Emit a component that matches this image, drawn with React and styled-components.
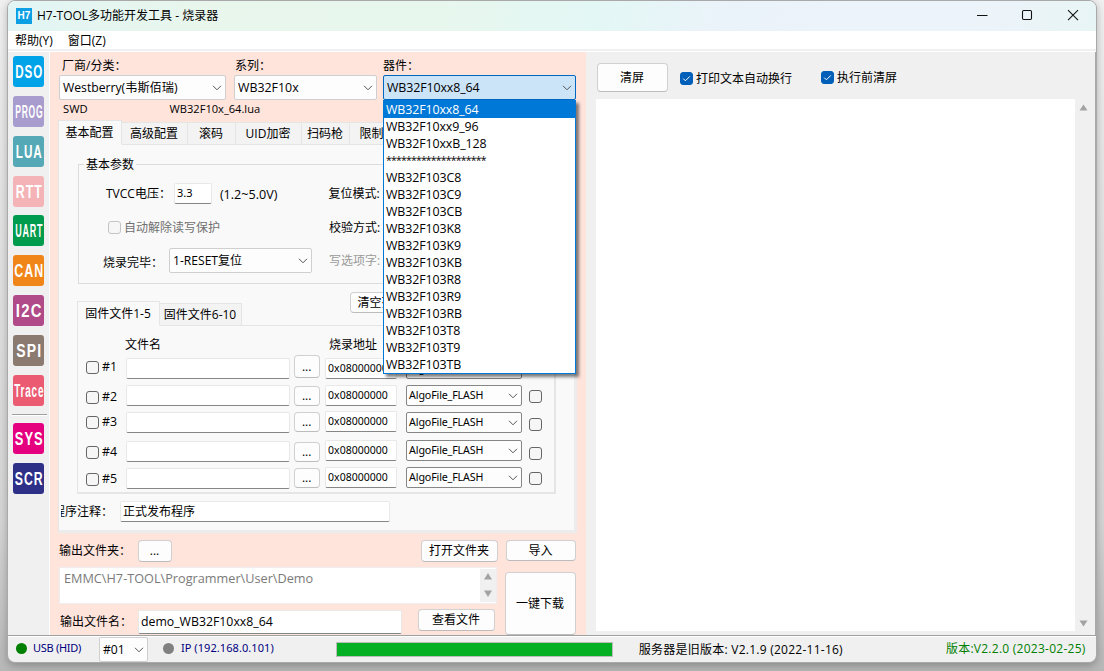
import { useState } from 'react';
import styled, { createGlobalStyle } from 'styled-components';

const GlobalStyle = createGlobalStyle`
  * {
    box-sizing: border-box;
  }

  body {
    margin: 0;
    overflow: hidden;
    font-family: "Open Sans", "Noto Sans CJK SC", sans-serif;
    font-size: 12px;
    color: #000;
  }
`;

const Desktop = styled.div`
  width: 1104px;
  height: 671px;
  padding: 0 7px 9px;
  overflow: hidden;
  background: linear-gradient(180deg, #f0f0f0 0, #e4e4e4 200px, #d6d6d6 520px, #b8b8b8 671px);
`;

const Window = styled.div`
  display: flex;
  flex-direction: column;
  width: 1090px;
  height: 663px;
  border: 1px solid #a9a9a9;
  border-radius: 8px;
  overflow: hidden;
  background: #f0f0f0;
  box-shadow: 0 3px 9px rgba(0, 0, 0, 0.25);
`;

const TitleBar = styled.div`
  display: flex;
  align-items: center;
  flex: none;
  height: 30px;
  padding-left: 8px;
  background: linear-gradient(100deg, #e2f5f5 0, #e8f6ec 18%, #e8f7ed 38%, #e3f7f5 54%, #ebf3fa 66%, #edf3fa 88%, #e8f5f5 100%);
`;

const Logo = styled.div`
  width: 16px;
  height: 16px;
  margin-right: 5px;
  background: #0d9fe4;
  color: #fff;
  font: bold 10px/16px "Liberation Sans", sans-serif;
  text-align: center;
`;

const Text = styled.span`
  display: inline-block;
  flex: none;
  white-space: pre;
  font-family: ${(p) => (p.$tahoma ? '"Noto Sans", sans-serif' : 'inherit')};
  font-size: ${(p) => p.$size || 12}px;
  line-height: 16px;
  letter-spacing: ${(p) => p.$ls || 0}px;
  color: ${(p) => p.$color || '#000'};
  margin-left: ${(p) => p.$ml || 0}px;
  margin-top: ${(p) => p.$mt || 0}px;
`;

const Controls = styled.svg`
  margin-left: auto;
  fill: none;
  stroke: #111;
  stroke-width: 1.1;
`;

const MenuBar = styled.div`
  display: flex;
  gap: 15px;
  flex: none;
  height: 18px;
  padding-left: 7px;
  background: #fff;
`;

const Divider = styled.div`
  flex: none;
  height: 3px;
  background: #f0f0f0;
  border-bottom: 1px solid #fff;
`;

const Body = styled.div`
  display: flex;
  height: 583px;
  flex: none;
`;

const Sidebar = styled.div`
  width: 42px;
  padding: 4px 0 0 5px;
  border-right: 1px solid #fff;
`;

const ToolIcon = styled.svg`
  display: block;
  margin-bottom: ${(p) => p.$gap}px;
  font-family: "Liberation Sans", sans-serif;
  font-weight: bold;
  letter-spacing: 1.5px;
`;

const SideLine = styled.div`
  width: 35px;
  height: 2px;
  margin: 8px 0 7px -1px;
  background: #a0a0a0;
  border-bottom: 1px solid #fff;
`;

const Programmer = styled.div`
  width: 536px;
  padding-left: 8px;
  background: #ffe4dc;
`;

const Row = styled.div`
  display: flex;
  align-items: ${(p) => p.$align || 'flex-start'};
  height: ${(p) => p.$h}px;
  padding-left: ${(p) => p.$pl || 0}px;
`;

const Chooser = styled.div`
  position: relative;
  width: ${(p) => p.$w}px;
  margin-left: ${(p) => p.$ml || 0}px;
  padding-top: 5px;
`;

const Combo = styled.div`
  display: flex;
  align-items: center;
  justify-content: space-between;
  flex: none;
  width: ${(p) => p.$w}px;
  height: ${(p) => p.$h || 25}px;
  margin-left: ${(p) => p.$ml || 0}px;
  margin-top: ${(p) => p.$mt || 0}px;
  padding: 0 3px 0 ${(p) => p.$pl || 3}px;
  border: 1px solid ${(p) => (p.$open ? '#0067c0' : p.$border || '#cfcfcf')};
  border-radius: 2px;
  background: ${(p) => (p.$open ? '#cce4f7' : '#fdfdfd')};
`;

const DropList = styled.ul`
  position: absolute;
  z-index: 2;
  top: 48px;
  left: 0;
  width: 193px;
  margin: 0;
  padding: 0;
  list-style: none;
  background: #fff;
  border: 1px solid #0078d7;
  box-shadow: 3px 3px 3px rgba(0, 0, 0, 0.5);
`;

const DropItem = styled.li`
  height: 17px;
  padding-left: 2px;
  font-size: ${(p) => (p.$rule ? 10.5 : 12.4)}px;
  line-height: ${(p) => (p.$rule ? 17 : 18)}px;
  letter-spacing: ${(p) => (p.$rule ? -0.8 : -0.1)}px;
  white-space: nowrap;
  color: ${(p) => (p.$selected ? '#fff' : '#000')};
  background: ${(p) => (p.$selected ? '#0078d7' : '#fff')};
`;

const Tabs = styled.div`
  display: flex;
  align-items: flex-end;
  width: ${(p) => p.$w}px;
  height: 25px;
  margin-bottom: -1px;
  overflow: hidden;
`;

const Tab = styled.div`
  display: flex;
  justify-content: center;
  align-items: center;
  flex: none;
  width: ${(p) => p.$w}px;
  height: ${(p) => (p.$active ? 25 : 23)}px;
  padding-bottom: ${(p) => (p.$active ? 2 : 1)}px;
  padding-right: 1px;
  border: 1px solid #e5e5e5;
  border-left-width: ${(p) => (p.$active ? 1 : 0)}px;
  border-bottom-color: ${(p) => (p.$active ? '#f9f9f9' : '#e5e5e5')};
  background: ${(p) => (p.$active ? '#f9f9f9' : '#f3f3f3')};
`;

const TabPage = styled.div`
  width: 519px;
  height: 389px;
  border: 1px solid #e5e5e5;
  border-right: 3px solid #ececec;
  border-bottom: 3px solid #ececec;
  background: #f9f9f9;
`;

const Group = styled.fieldset`
  width: 477px;
  height: 128px;
  min-width: 0;
  margin: 0 0 0 19px;
  padding: 0;
  border: 1px solid #dcdcdc;

  legend {
    height: 17px;
    margin-left: 5px;
    padding: 0 2px;
    line-height: 17px;
  }
`;

const FilePage = styled.div`
  width: 479px;
  height: 169px;
  margin-left: 18px;
  border: 1px solid #e5e5e5;
  border-right-width: 2px;
  border-bottom-width: 2px;
`;

const Clip = styled.div`
  display: flex;
  justify-content: flex-end;
  flex: none;
  width: 52px;
  height: 30px;
  overflow: hidden;
`;

const Field = styled.div`
  display: flex;
  align-items: center;
  flex: none;
  width: ${(p) => p.$w}px;
  height: ${(p) => p.$h || 21}px;
  margin-left: ${(p) => p.$ml || 0}px;
  margin-top: ${(p) => p.$mt || 0}px;
  padding: 0 0 1px 2px;
  border: 1px solid #e8e8e8;
  border-bottom-color: #868686;
  border-radius: 2px;
  background: #fff;
`;

const Button = styled.button`
  display: flex;
  align-items: center;
  justify-content: center;
  flex: none;
  width: ${(p) => p.$w}px;
  height: ${(p) => p.$h}px;
  margin: 0;
  margin-left: ${(p) => p.$ml || 0}px;
  margin-top: ${(p) => p.$mt || 0}px;
  padding: 0 1px 0 0;
  border: 1px solid #d0d0d0;
  border-bottom-color: #bcbcbc;
  border-radius: 4px;
  background: #fdfdfd;
  font: inherit;
  line-height: 16px;
  color: #000;
`;

const Box = styled.span`
  display: flex;
  flex: none;
  width: 13px;
  height: 13px;
  margin-left: ${(p) => p.$ml || 0}px;
  margin-top: ${(p) => p.$mt || 0}px;
  border: 1px solid ${(p) => (p.$checked ? '#005fb8' : p.$disabled ? '#c5c5c5' : '#666')};
  border-radius: 3px;
  background: ${(p) => (p.$checked ? '#005fb8' : '#f6f6f6')};
`;

const PathBox = styled.div`
  display: flex;
  justify-content: space-between;
  width: 438px;
  height: 37px;
  margin-left: 1px;
  padding: 1px 0 1px 1px;
  border: 1px solid #eee;
  background: #fff;
`;

const Spinner = styled.div`
  width: 16px;
  height: 33px;
  background: #f0f0f0;
`;

const Console = styled.div`
  flex: 1;
  padding: 0 0 0 10px;
  border-right: 1px solid #a8a8a8;
`;

const Output = styled.div`
  display: flex;
  justify-content: flex-end;
  height: 532px;
  background: #fff;
`;

const ScrollBar = styled.svg`
  flex: none;
  background: #f0f0f0;
  fill: #a3a3a3;
`;

const StatusBar = styled.div`
  display: flex;
  align-items: flex-start;
  flex: none;
  height: 27px;
  border-top: 1px solid #a0a0a0;
  box-shadow: inset 0 1px 0 #fff;
`;

const Dot = styled.span`
  flex: none;
  width: 11px;
  height: 11px;
  margin: 7px 0 0 ${(p) => p.$ml}px;
  border-radius: 50%;
  background: ${(p) => p.$color};
`;

const Progress = styled.div`
  flex: none;
  width: 277px;
  height: 15px;
  margin: 6px 0 0 62px;
  border: 1px solid #bcbcbc;
  background: #06b025;
`;

const tools = [
  { name: 'DSO', color: '#00a2e8', w: 28 },
  { name: 'PROG', color: '#a89bcd', w: 28 },
  { name: 'LUA', color: '#55a9b6', w: 27 },
  { name: 'RTT', color: '#f4b3b6', w: 27, gap: 8 },
  { name: 'UART', color: '#009b4c', w: 28 },
  { name: 'CAN', color: '#f08519', w: 30 },
  { name: 'I2C', color: '#b14a88', w: 27 },
  { name: 'SPI', color: '#8b7a70', w: 26 },
  { name: 'Trace', color: '#eb5c72', w: 30, gap: 0 },
];

const systemTools = [
  { name: 'SYS', color: '#e4007f', w: 29 },
  { name: 'SCR', color: '#2e3088', w: 29 },
];

const devices = [
  'WB32F10xx8_64', 'WB32F10xx9_96', 'WB32F10xxB_128', '********************',
  'WB32F103C8', 'WB32F103C9', 'WB32F103CB', 'WB32F103K8', 'WB32F103K9', 'WB32F103KB',
  'WB32F103R8', 'WB32F103R9', 'WB32F103RB', 'WB32F103T8', 'WB32F103T9', 'WB32F103TB',
];

// h is the height of the row, the other numbers are each cell's distance from its top
const files = [
  { h: 30, check: 6, file: 3, btn: 0, btnH: 23, addr: 3, algo: 3, last: 6, checked: true },
  { h: 26, check: 6, file: 0, btn: 1, btnH: 20, addr: 0, algo: 0, last: 5 },
  { h: 29, check: 5, file: 1, btn: 1, btnH: 20, addr: 0, algo: 1, last: 7 },
  { h: 27, check: 6, file: 1, btn: 2, btnH: 20, addr: 0, algo: 0, last: 7 },
  { h: 22, check: 6, file: 1, btn: 1, btnH: 20, addr: 0, algo: 0, last: 5 },
];

function Chevron() {
  return (
    <svg width="10" height="6" viewBox="0 0 10 6" fill="none" stroke="#555" strokeWidth="1">
      <path d="M1 0.8 5 4.800 9 0.8" />
    </svg>
  );
}

function Check({ checked, ...rest }) {
  return (
    <Box $checked={checked} {...rest}>
      {checked && (
        <svg width="11" height="11" viewBox="0 0 11 11" fill="none" stroke="#fff" strokeWidth="1">
          <path d="M2.2 5.6 4.4 7.8 8.8 3.4" />
        </svg>
      )}
    </Box>
  );
}

function Tool({ name, color, w, gap = 9 }) {
  return (
    <ToolIcon width="31" height="31" $gap={gap}>
      <rect width="31" height="31" rx="3" fill={color} />
      <text x={(32.5 - w) / 2} y="22" fontSize="18" fill="#fff" textLength={w} lengthAdjust="spacingAndGlyphs">
        {name}
      </text>
    </ToolIcon>
  );
}

function FileRow({ row, index }) {
  return (
    <Row $h={row.h} $pl={8}>
      <Check $mt={row.check} />
      <Text $size={12.4} $ml={3} $mt={row.check - 2}>#{index + 1}</Text>
      <Field $w={164} $ml={9} $mt={row.file} />
      <Button $w={26} $h={row.btnH} $ml={4} $mt={row.btn}>...</Button>
      <Field $w={72} $ml={5} $mt={row.addr}>
        <Text $tahoma $size={10.5}>0x08000000</Text>
      </Field>
      <Combo $w={116} $h={21} $ml={9} $mt={row.algo} $pl={2} $border="#868686">
        <Text $tahoma $size={10.7} $ls={-0.15} $mt={-1}>AlgoFile_FLASH</Text>
        <Chevron />
      </Combo>
      <Check $ml={7} $mt={row.last} checked={row.checked} />
    </Row>
  );
}

function App() {
  const [device, setDevice] = useState(devices[0]);

  return (
    <Desktop>
      <GlobalStyle />
      <Window>
        <TitleBar>
          <Logo>H7</Logo>
          <Text $size={12}>H7-TOOL多功能开发工具 - 烧录器</Text>
          <Controls width="120" height="30">
            <path d="M1 14.5h10.5" />
            <rect x="46.5" y="9.5" width="9" height="9" rx="1.2" />
            <path d="M92 9.2 102 19.2M102 9.2 92 19.2" />
          </Controls>
        </TitleBar>
        <MenuBar>
          <Text $mt={2}>帮助(Y)</Text>
          <Text $mt={2}>窗口(Z)</Text>
        </MenuBar>
        <Divider />
        <Body>
          <Sidebar>
            {tools.map((tool) => <Tool key={tool.name} {...tool} />)}
            <SideLine />
            {systemTools.map((tool) => <Tool key={tool.name} {...tool} />)}
          </Sidebar>

          <Programmer>
            <Row $h={48}>
              <Chooser $w={167} $ml={1}>
                <Text $ml={3}>厂商/分类：</Text>
                <Combo $w={167} $mt={1}>
                  <Text $size={12.2}>Westberry(韦斯佰瑞)</Text>
                  <Chevron />
                </Combo>
              </Chooser>
              <Chooser $w={143} $ml={8}>
                <Text $ml={1}>系列：</Text>
                <Combo $w={143} $mt={1}>
                  <Text $size={12.4}>WB32F10x</Text>
                  <Chevron />
                </Combo>
              </Chooser>
              <Chooser $w={193} $ml={6}>
                <Text>器件：</Text>
                <Combo $w={193} $mt={1} $open>
                  <Text $size={12.4} $ls={-0.1}>{device}</Text>
                  <Chevron />
                </Combo>
                <DropList>
                  {devices.map((name) => (
                    <DropItem
                      key={name}
                      $selected={name === device}
                      $rule={name.startsWith('*')}
                      onClick={() => setDevice(name)}
                    >
                      {name}
                    </DropItem>
                  ))}
                </DropList>
              </Chooser>
            </Row>
            <Row $h={20} $pl={5}>
              <Text $size={11.2} $mt={1}>SWD</Text>
              <Text $size={11.1} $ml={82} $mt={1}>WB32F10x_64.lua</Text>
            </Row>

            <Tabs $w={518}>
              <Tab $w={64} $active>基本配置</Tab>
              <Tab $w={66}>高级配置</Tab>
              <Tab $w={48}>滚码</Tab>
              <Tab $w={66}>UID加密</Tab>
              <Tab $w={48}>扫码枪</Tab>
              <Tab $w={69}>限制次数</Tab>
            </Tabs>
            <TabPage>
              <Row $h={11} />
              <Group>
                <legend>基本参数</legend>
                <Row $h={35} $pl={27}>
                  <Text $mt={13}>TVCC电压：</Text>
                  <Field $w={38} $ml={3} $mt={10}>
                    <Text $tahoma $size={11}>3.3</Text>
                  </Field>
                  <Text $size={12.6} $ml={8} $mt={14}>(1.2~5.0V)</Text>
                  <Text $ml={51} $mt={13}>复位模式:</Text>
                </Row>
                <Row $h={34} $pl={29}>
                  <Check $mt={13} $disabled />
                  <Text $ml={3} $mt={12} $color="#707070">自动解除读写保护</Text>
                  <Text $ml={109} $mt={12}>校验方式:</Text>
                </Row>
                <Row $h={34} $pl={24}>
                  <Text $mt={13}>烧录完毕：</Text>
                  <Combo $w={143} $ml={6} $mt={6}>
                    <Text $size={12.1}>1-RESET复位</Text>
                    <Chevron />
                  </Combo>
                  <Text $ml={17} $mt={11} $color="#9a9a9a">写选项字:</Text>
                </Row>
              </Group>

              <Row $h={41} $pl={18}>
                <Row $h={41} $align="flex-end">
                  <Tabs $w={165}>
                    <Tab $w={83} $active>固件文件1-5</Tab>
                    <Tab $w={82}>固件文件6-10</Tab>
                  </Tabs>
                </Row>
                <Button $w={64} $h={21} $ml={108} $mt={8}>清空列表</Button>
              </Row>
              <FilePage>
                <Row $h={29} $pl={47}>
                  <Text $mt={11}>文件名</Text>
                  <Text $ml={168} $mt={11}>烧录地址</Text>
                </Row>
                {files.map((row, i) => <FileRow key={row.h} row={row} index={i} />)}
              </FilePage>
              <Row $h={36} $pl={2}>
                <Clip>
                  <Text $mt={10}>程序注释：</Text>
                </Clip>
                <Field $w={270} $ml={7} $mt={7}>正式发布程序</Field>
              </Row>
            </TabPage>

            <Row $h={34} $pl={1}>
              <Text $mt={10}>输出文件夹：</Text>
              <Button $w={34} $h={22} $ml={7} $mt={7}>...</Button>
              <Button $w={77} $h={22} $ml={249} $mt={7}>打开文件夹</Button>
              <Button $w={70} $h={21} $ml={8} $mt={7}>导入</Button>
            </Row>
            <Row $h={70}>
              <div>
                <PathBox>
                  <Text $size={12.7} $ml={3} $mt={1} $color="#7a7a7a">EMMC\H7-TOOL\Programmer\User\Demo</Text>
                  <Spinner>
                    <svg width="16" height="33" fill="#a3a3a3">
                      <path d="M8 4 12 10.500H4zM8 28 12 21.500H4z" />
                    </svg>
                  </Spinner>
                </PathBox>
                <Row $h={33} $pl={2}>
                  <Text $mt={10}>输出文件名：</Text>
                  <Field $w={264} $h={24} $ml={6} $mt={6}>
                    <Text $size={12.3}>demo_WB32F10xx8_64</Text>
                  </Field>
                  <Button $w={77} $h={22} $ml={16} $mt={5}>查看文件</Button>
                </Row>
              </div>
              <Button $w={71} $h={63} $ml={8} $mt={5}>一键下载</Button>
            </Row>
          </Programmer>

          <Console>
            <Row $h={47}>
              <Button $w={71} $h={29} $ml={1} $mt={11}>清屏</Button>
              <Check checked $ml={12} $mt={20} />
              <Text $ml={3} $mt={19}>打印文本自动换行</Text>
              <Check checked $ml={29} $mt={19} />
              <Text $ml={3} $mt={18}>执行前清屏</Text>
            </Row>
            <Output>
              <ScrollBar width="20" height="532">
                <path d="M8.500 5.500 12.500 11.500H4.500zM8.500 527.500 12.500 521.500H4.500z" />
              </ScrollBar>
            </Output>
          </Console>
        </Body>
        <StatusBar>
          <Dot $ml={8} $color="#008000" />
          <Text $tahoma $size={11} $ls={-0.3} $ml={6} $mt={4} $color="#000080">USB (HID)</Text>
          <Combo $w={49} $ml={18} $mt={1}>
            <Text $size={12.2}>#01</Text>
            <Chevron />
          </Combo>
          <Dot $ml={15} $color="#808080" />
          <Text $tahoma $size={11} $ls={0.07} $ml={7} $mt={4} $color="#000080">IP (192.168.0.101)</Text>
          <Progress />
          <Text $size={12} $ls={0.25} $ml={26} $mt={6}>服务器是旧版本: V2.1.9 (2022-11-16)</Text>
          <Text $size={12} $ls={0.26} $ml={103} $mt={5} $color="#008000">版本:V2.2.0 (2023-02-25)</Text>
        </StatusBar>
      </Window>
    </Desktop>
  );
}

export default App;
